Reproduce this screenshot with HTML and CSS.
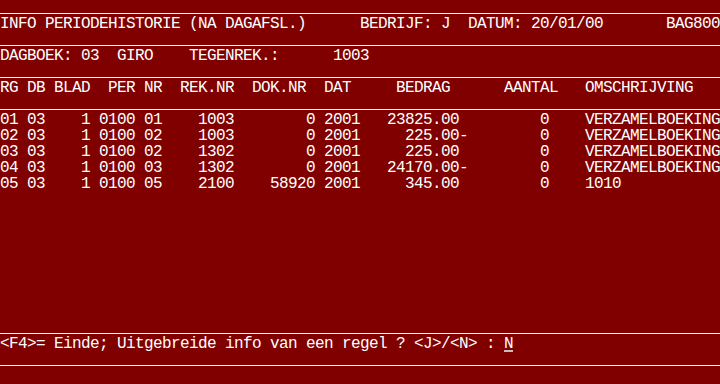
FILE: index.html
```html
<!DOCTYPE html>
<html lang="nl">
<head>
    <meta charset="UTF-8">
    <title>Info periodehistorie</title>
    <link rel="stylesheet" href="styles.css">
</head>
<body>
    <div class="screen">
        <div class="rule"></div>
        <div class="line">INFO PERIODEHISTORIE (NA DAGAFSL.)      BEDRIJF: J  DATUM: 20/01/00       BAG800</div>
        <div class="rule"></div>
        <div class="line">DAGBOEK: 03  GIRO    TEGENREK.:      1003</div>
        <div class="rule"></div>
        <div class="line">RG DB BLAD  PER NR  REK.NR  DOK.NR  DAT     BEDRAG      AANTAL   OMSCHRIJVING</div>
        <div class="rule"></div>

        <!-- regels -->
        <div class="list">
            <div class="line">01 03    1 0100 01    1003        0 2001   23825.00         0    VERZAMELBOEKING</div>
            <div class="line">02 03    1 0100 02    1003        0 2001     225.00-        0    VERZAMELBOEKING</div>
            <div class="line">03 03    1 0100 02    1302        0 2001     225.00         0    VERZAMELBOEKING</div>
            <div class="line">04 03    1 0100 03    1302        0 2001   24170.00-        0    VERZAMELBOEKING</div>
            <div class="line">05 03    1 0100 05    2100    58920 2001     345.00         0    1010</div>
        </div>

        <div class="rule"></div>
        <div class="line">&lt;F4&gt;= Einde; Uitgebreide info van een regel ? &lt;J&gt;/&lt;N&gt; : <span class="cursor">N</span></div>
        <div class="rule"></div>
        <div class="line"></div>
    </div>
</body>
</html>
```

FILE: styles.css
```css
html, body {
    margin: 0;
    padding: 0;
    background-color: #800000;
}
.screen {
    width: 720px;
    height: 384px;
    display: flex;
    flex-direction: column;
    background-color: #800000;
    color: #fff;
    font-family: "Liberation Mono", "DejaVu Sans Mono", monospace;
    font-size: 16px;
    letter-spacing: -0.6px;
    overflow: hidden;
}
.line {
    height: 16px;
    line-height: 16px;
    white-space: pre;
}
.rule {
    height: 13px;
    border-bottom: 1px solid #fff;
    margin-bottom: 2px;
    flex-shrink: 0;
}
.list {
    flex: 1;
}
.cursor {
    display: inline-block;
    height: 16px;
    box-sizing: border-box;
    border-bottom: 2px solid #c0c0c0;
    vertical-align: top;
}
```
